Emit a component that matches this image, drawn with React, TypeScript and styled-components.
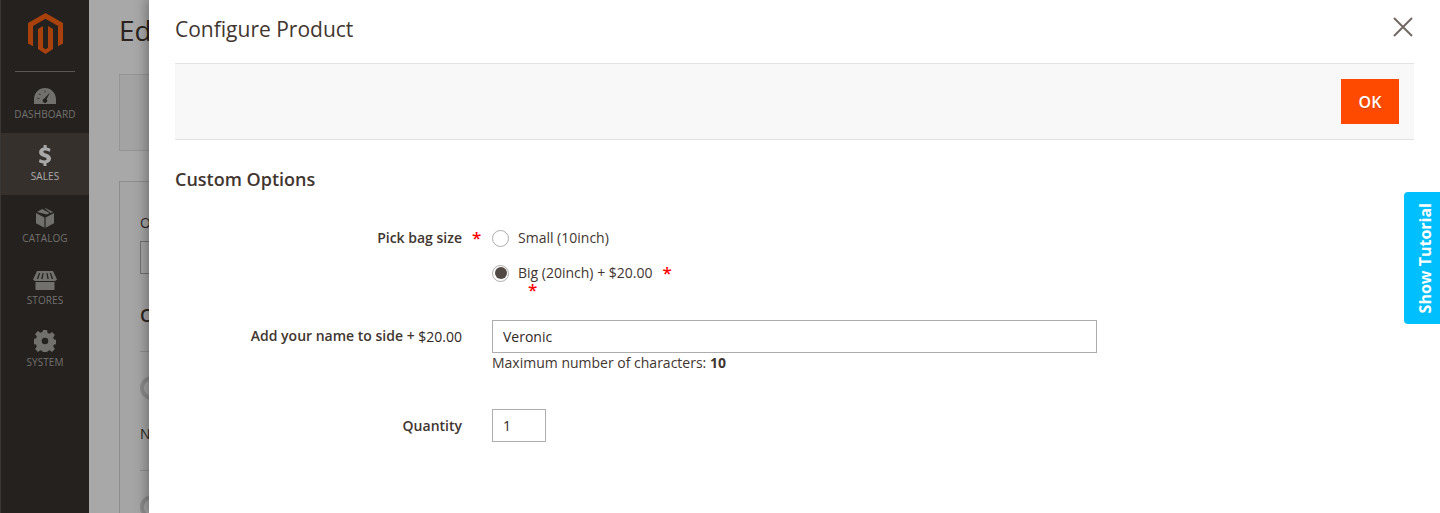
import React from 'react'
import styled, { createGlobalStyle } from 'styled-components'

const GlobalStyle = createGlobalStyle`
  html, body { margin: 0; padding: 0; height: 100%; overflow: hidden; }
  #root { height: 100%; }
  * { box-sizing: border-box; }
  body { font-family: 'Open Sans', sans-serif; color: #41362f; background: #fff; }
`

const Page = styled.div`
  position: relative;
  display: flex;
  width: 1440px;
  height: 513px;
  overflow: hidden;
`

const Sidebar = styled.nav`
  width: 89px;
  flex-shrink: 0;
  background: #373330;
  border-left: 1px solid #555;
  display: flex;
  flex-direction: column;
  align-items: stretch;
`

const LogoWrap = styled.div`
  height: 72px;
  margin: 0 14px -1px;
  padding-top: 13px;
  display: flex;
  justify-content: center;
  border-bottom: 1px solid #8a8580;
`

const NavItem = styled.div<{ $active?: boolean }>`
  height: 62px;
  display: flex;
  flex-direction: column;
  align-items: center;
  justify-content: flex-end;
  padding-bottom: 12px;
  gap: 3px;
  font-size: 10px;
  line-height: 14px;
  letter-spacing: 0.1px;
  color: ${p => (p.$active ? '#fff' : '#adaaa4')};
  background: ${p => (p.$active ? '#514943' : 'transparent')};
  svg { fill: ${p => (p.$active ? '#fff' : '#adaaa4')}; display: block; }
`

const Main = styled.main`
  flex: 1;
  padding-left: 30px;
  background: #fff;
`

const PageTitle = styled.h1`
  margin: 0;
  height: 74px;
  padding-top: 9px;
  font-size: 28px;
  line-height: 42px;
  font-weight: 400;
`

const ActionBar = styled.div`
  height: 77px;
  background: #f8f8f8;
  border: 1px solid #e3e3e3;
`

const Section = styled.section`
  margin-top: 30px;
  height: 400px;
  padding: 32px 20px 0;
  background: #fbfbfb;
  border: 1px solid #d6d6d6;
`

const BackLabel = styled.div`
  font-size: 14px;
  line-height: 18px;
`

const BackInput = styled.div`
  margin-top: 9px;
  width: 300px;
  height: 33px;
  border: 1px solid #adadad;
`

const BackHeading = styled.div`
  margin-top: 29px;
  height: 49px;
  font-size: 18px;
  line-height: 24px;
  font-weight: 600;
  border-bottom: 1px solid #d6d6d6;
`

const BackIcon = styled.div`
  margin-top: 24px;
  width: 24px;
  height: 24px;
  border: 4px solid #d4d4d4;
  border-radius: 50%;
`

const BackName = styled.div`
  margin-top: 24px;
  height: 47px;
  font-size: 14px;
  line-height: 20px;
  border-bottom: 1px solid #d6d6d6;
`

const Overlay = styled.div`
  position: absolute;
  inset: 0;
  background: rgba(0, 0, 0, 0.34);
`

const Modal = styled.div`
  position: absolute;
  top: 0;
  left: 149px;
  right: 0;
  bottom: 0;
  background: #fff;
  padding: 0 26px;
  box-shadow: 0 0 12px 2px rgba(0, 0, 0, 0.35);
`

const ModalHeader = styled.header`
  height: 63px;
  padding-top: 15px;
`

const ModalTitle = styled.h2`
  margin: 0;
  font-size: 21px;
  line-height: 28px;
  font-weight: 400;
`

const CloseButton = styled.button`
  position: absolute;
  top: 16px;
  right: 26px;
  width: 22px;
  height: 22px;
  padding: 0;
  border: 0;
  background: none;
  svg { display: block; }
`

const Toolbar = styled.div`
  height: 77px;
  display: flex;
  align-items: center;
  justify-content: flex-end;
  padding: 0 15px 0 0;
  background: #f8f8f8;
  border-top: 1px solid #e3e3e3;
  border-bottom: 1px solid #e3e3e3;
`

const OkButton = styled.button`
  width: 58px;
  height: 45px;
  border: 0;
  background: #fe4a00;
  color: #fff;
  font-family: 'Open Sans', sans-serif;
  font-size: 16px;
  font-weight: 600;
  text-shadow: 0 1px 0 rgba(0, 0, 0, 0.2);
`

const SectionTitle = styled.h3`
  margin: 26px 0 0;
  font-size: 18px;
  line-height: 26px;
  font-weight: 600;
`

const FieldRow = styled.div<{ $top: number }>`
  display: grid;
  grid-template-columns: 287px 30px 1fr;
  margin-top: ${p => p.$top}px;
`

const FieldLabel = styled.div<{ $offset?: number }>`
  padding-top: ${p => p.$offset ?? 0}px;
  text-align: right;
  font-size: 14px;
  line-height: 20px;
  font-weight: 600;
`

const PriceNote = styled.span`
  position: relative;
  top: 1px;
  font-weight: 400;
  color: #302823;
`

const Star = styled.span`
  color: #f00;
  font-size: 17px;
  line-height: 20px;
  font-weight: 600;
`

const LabelStar = styled(Star)`
  padding-left: 10px;
`

const FieldBody = styled.div`
  display: flex;
  flex-direction: column;
  align-items: flex-start;
`

const RadioRow = styled.div`
  display: flex;
  align-items: center;
  height: 20px;
  font-size: 14px;
  line-height: 20px;
  margin-bottom: 15px;
`

const Radio = styled.span<{ $checked?: boolean }>`
  width: 17px;
  height: 17px;
  margin-right: 9px;
  border-radius: 50%;
  border: 1px solid #adadad;
  background: #fff;
  display: flex;
  align-items: center;
  justify-content: center;
  &::after {
    content: '';
    display: ${p => (p.$checked ? 'block' : 'none')};
    width: 12px;
    height: 12px;
    border-radius: 50%;
    background: #514943;
  }
`

const InlineStar = styled(Star)`
  margin-left: 10px;
`

const OrphanStar = styled(Star)`
  display: block;
  margin: -15px 0 0 36px;
  height: 14px;
  line-height: 14px;
`

const TextInput = styled.input<{ $width: number }>`
  width: ${p => p.$width}px;
  height: 33px;
  padding: 0 10px;
  border: 1px solid #adadad;
  border-radius: 0;
  outline: none;
  font-family: 'Open Sans', sans-serif;
  font-size: 14px;
  color: #302823;
`

const Hint = styled.div`
  font-size: 14px;
  line-height: 19px;
  strong { font-weight: 700; }
`

const TutorialTab = styled.button`
  position: absolute;
  top: 192px;
  right: 0;
  width: 36px;
  height: 132px;
  padding: 0 0 0 5px;
  border: 0;
  border-radius: 4px 0 0 4px;
  background: #00bfff;
  color: #fff;
  font-family: 'Open Sans', sans-serif;
  font-size: 16px;
  font-weight: 700;
  display: flex;
  align-items: center;
  justify-content: center;
  span {
    writing-mode: vertical-rl;
    transform: rotate(180deg);
    white-space: nowrap;
  }
`

const navItems = [
  {
    label: 'DASHBOARD',
    icon: (
      <svg width="22" height="16" viewBox="0 0 22 16">
        <path
          fillRule="evenodd"
          d="M11 0C5 0 .2 4.700 0 11v5h22v-5C21.800 4.700 17 0 11 0zM16 4.500l-3.400 6.700a2.200 2.200 0 1 1-2.300-.6L16 4.500zM3.500 9.800l1.900.5-.2.7-1.900-.5zM5.300 5.400l1.500 1.300-.5.500-1.500-1.300zM10.700 2.500h.7v2h-.7z"
        />
      </svg>
    ),
  },
  {
    label: 'SALES',
    active: true,
    icon: (
      <svg width="14" height="21" viewBox="0 0 14 21">
        <path d="M5.600 0h3v2.600c1.600.2 3 .7 4 1.300l-1 3c-1.100-.7-2.700-1.300-4.200-1.300-1.300 0-2 .5-2 1.200 0 .8.9 1.200 3 2 3 1 4.600 2.400 4.600 4.800 0 2.300-1.600 4.200-4.500 4.700V21h-3v-2.500c-1.900-.1-3.600-.7-4.700-1.400l1-3c1.200.7 2.900 1.400 4.600 1.400 1.400 0 2.300-.5 2.300-1.400 0-.8-.8-1.300-2.700-2C3 11 1.100 9.800 1.100 7.200c0-2.300 1.600-4.100 4.500-4.600z" />
      </svg>
    ),
  },
  {
    label: 'CATALOG',
    icon: (
      <svg width="18" height="20" viewBox="0 0 18 20">
        <path d="M8.400 9.400v10.400L0 15.200V5zM9.600 9.400v10.400l8.400-4.600V5zM1 3.900 6.200 1l7.400 4-2.700 1.500zM8.700.2 9.300 0 17 3.900l-2.300 1.200z" />
      </svg>
    ),
  },
  {
    label: 'STORES',
    icon: (
      <svg width="24" height="19" viewBox="0 0 24 19">
        <path
          fillRule="evenodd"
          d="M4 0h16l4 8.500-1.800 1.500H1.800L0 8.500zM6 2 3.800 8h1.400l2-6zM9.500 2 8.200 8h1.400l1-6zM13.400 2l1 6h1.400l-1.300-6zM16.800 2l2 6h1.400L18 2zM2.500 11h19v8h-19z"
        />
      </svg>
    ),
  },
  {
    label: 'SYSTEM',
    icon: (
      <svg width="22" height="22" viewBox="0 0 22 22">
        <path
          fillRule="evenodd"
          d="M9 0h4l.6 3 2 .8 2.500-1.700 2.800 2.800-1.700 2.500.8 2 3 .6v4l-3 .6-.8 2 1.700 2.500-2.800 2.800-2.500-1.700-2 .8-.6 3H9l-.6-3-2-.8-2.500 1.700-2.800-2.800 1.700-2.500-.8-2-3-.6V9l3-.6.8-2-1.700-2.500 2.800-2.800 2.500 1.700 2-.8zM11 7.700a3.300 3.300 0 1 0 0 6.600 3.300 3.300 0 0 0 0-6.600z"
        />
      </svg>
    ),
  },
]

export default function App() {
  return (
    <Page>
      <GlobalStyle />
      <Sidebar>
        <LogoWrap>
          <svg width="35" height="41" viewBox="0 0 35 41">
            <path
              fill="#ff6311"
              d="M17.500 0 0 10.100v20.300l5 2.900V13l12.500-7.200L30 13v20.300l5-2.900V10.100zM20 34.800 17.500 36.300 15 34.800V13l-5 2.900v20.200L17.500 41 25 36.100V15.900L20 13z"
            />
          </svg>
        </LogoWrap>
        {navItems.map(item => (
          <NavItem key={item.label} $active={item.active}>
            {item.icon}
            {item.label}
          </NavItem>
        ))}
      </Sidebar>
      <Main>
        <PageTitle>Ed</PageTitle>
        <ActionBar />
        <Section>
          <BackLabel>O</BackLabel>
          <BackInput />
          <BackHeading>C</BackHeading>
          <BackIcon />
          <BackName>N</BackName>
          <BackIcon />
        </Section>
      </Main>
      <Overlay />
      <Modal>
        <ModalHeader>
          <ModalTitle>Configure Product</ModalTitle>
          <CloseButton aria-label="Close">
            <svg width="22" height="22" viewBox="0 0 22 22">
              <path d="M2 2l18 18M20 2 2 20" stroke="#736963" strokeWidth="2" fill="none" />
            </svg>
          </CloseButton>
        </ModalHeader>
        <Toolbar>
          <OkButton>OK</OkButton>
        </Toolbar>
        <SectionTitle>Custom Options</SectionTitle>
        <FieldRow $top={36}>
          <FieldLabel>Pick bag size</FieldLabel>
          <LabelStar>*</LabelStar>
          <FieldBody>
            <RadioRow>
              <Radio />
              Small (10inch)
            </RadioRow>
            <RadioRow>
              <Radio $checked />
              Big (20inch) + $20.00
              <InlineStar>*</InlineStar>
            </RadioRow>
            <OrphanStar>*</OrphanStar>
          </FieldBody>
        </FieldRow>
        <FieldRow $top={23}>
          <FieldLabel $offset={6}>
            Add your name to side + <PriceNote>$20.00</PriceNote>
          </FieldLabel>
          <span />
          <FieldBody>
            <TextInput $width={605} defaultValue="Veronic" />
            <Hint>
              Maximum number of characters: <strong>10</strong>
            </Hint>
          </FieldBody>
        </FieldRow>
        <FieldRow $top={37}>
          <FieldLabel $offset={7}>Quantity</FieldLabel>
          <span />
          <FieldBody>
            <TextInput $width={54} defaultValue="1" />
          </FieldBody>
        </FieldRow>
        <TutorialTab>
          <span>Show Tutorial</span>
        </TutorialTab>
      </Modal>
    </Page>
  )
}
